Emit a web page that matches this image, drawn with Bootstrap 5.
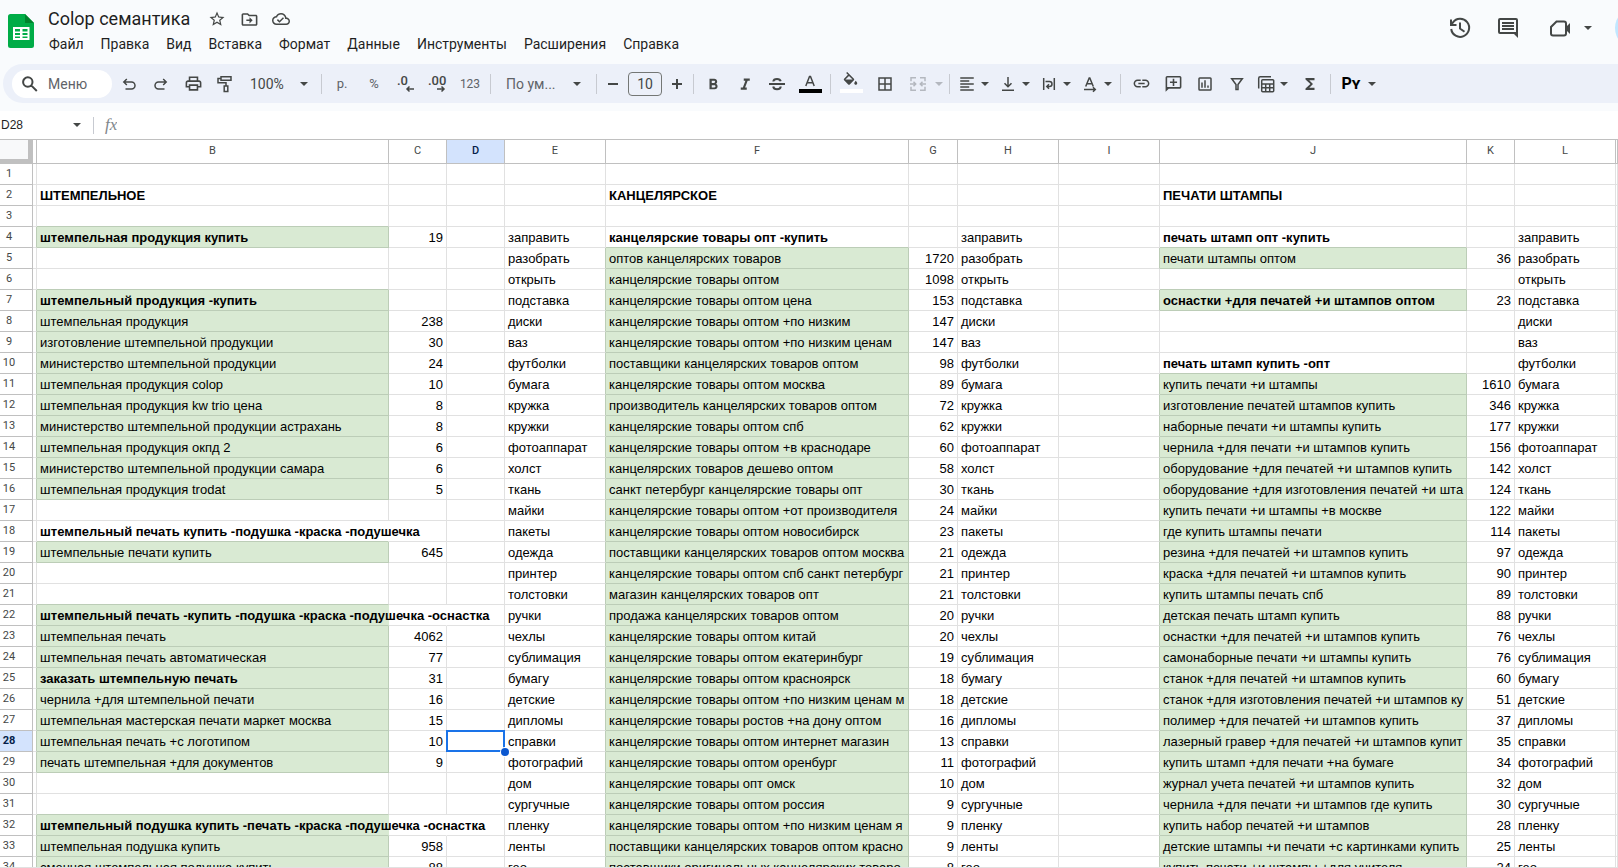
<!DOCTYPE html>
<html lang="ru">
<head>
<meta charset="utf-8">
<meta name="viewport" content="width=device-width, initial-scale=1">
<title>Colop семантика</title>
<link href="https://cdn.jsdelivr.net/npm/bootstrap@5.3.0/dist/css/bootstrap.min.css" rel="stylesheet">
<style>
  body { background: #f9fbfd; color: #1f1f1f; font-family: Roboto, sans-serif; font-size: 14px; line-height: 20px; }
  button { background: none; border: 0; padding: 0; color: #444746; }
  svg { display: block; fill: currentColor; flex: none; }
  .ln { fill: none; stroke: currentColor; stroke-width: 2; }
  .thin { stroke-width: 1.5; }

  .app-head { padding: 7px 0 10px 8px; }
  .logo { margin: 7px 14px 0 0; }
  .doc-title { font-size: 18px; line-height: 24px; font-weight: 400; margin: 0 11px 0 0; }
  .doc-menu { gap: 17px; margin: 3px 0 0 1px; }
  .doc-menu a { color: #1f1f1f; text-decoration: none; }
  .head-btn { width: 48px; height: 42px; }
  .meet-btn { margin-right: 21px; }
  .share-peek { width: 3px; height: 40px; overflow: hidden; }
  .share-peek span { display: block; width: 120px; height: 40px; border-radius: 20px; background: #c2e7ff; }

  .toolbar { background: #ecf0f9; height: 40px; margin: 0 0 8px 3px; padding-left: 9px; border-radius: 20px 0 0 20px; overflow: hidden; }
  .search-pill { width: 100px; height: 28px; border-radius: 14px; background: #fff; padding-left: 9px; gap: 9px; margin-right: 1px; color: #444746; flex: none; }
  .search-pill input { border: 0; outline: 0; background: none; width: 60px; padding: 0; color: #444746; }
  .search-pill input::placeholder { color: #5f6368; opacity: 1; }
  .tool { width: 32px; height: 32px; flex: none; display: flex; align-items: center; justify-content: center; }
  .tool-low { height: 24px; }
  .tool-wide { width: 35px; }
  .tool-slim { width: 24px; }
  .tool-set { gap: 2px; }
  .tool-drop { height: 32px; flex: none; display: flex; align-items: center; padding: 0 2px 0 1px; }
  .tool-drop .pic { width: 24px; display: flex; justify-content: center; }
  .tool-drop.roomy { padding-right: 0; }
  .tool-drop.roomy .pic { width: 30px; }
  .caret { width: 12px; height: 12px; }
  .rule { width: 1px; height: 20px; background: #c7cad1; margin: 0 4px; flex: none; }
  .zoom-btn { width: 76px; padding: 0 7px 0 9px; }
  .font-btn { width: 97px; padding: 0 9px 0 11px; color: #5f6368; }
  .size-box { width: 34px; height: 24px; border: 1px solid #747775; border-radius: 4px; background: none; text-align: center; padding: 0; margin: 0 3px; color: #444746; }
  .fmt { color: #5f6368; font-size: 13px; }
  .fmt-low { font-size: 12px; }
  .pen { font: 500 13px Roboto, sans-serif; }
  .py { color: #000; font-size: 16px; font-weight: 700; font-variant: small-caps; }
  .off { color: #b4b8bf; }

  .formula { background: #fff; height: 29px; border-bottom: 1px solid #c0c0c0; font-family: "Liberation Sans", sans-serif; font-size: 12px; }
  .name-box { width: 71px; border: 0; padding: 0 0 0 1px; background: none; color: #1f1f1f; }
  .formula .rule { height: 17px; margin: 0 11px 0 10px; }
  .fx { font: italic 400 17px "Liberation Serif", serif; color: #80868b; }
  .fx-input { border: 0; outline: 0; }

  .sheet { background: #fff; overflow: auto; scrollbar-width: none; border-bottom: 1px solid #e1e1e1; min-height: 0; }
  .sheet::-webkit-scrollbar { display: none; }
  .cells { table-layout: fixed; width: 100%; border-collapse: separate; border-spacing: 0; font-family: "Liberation Sans", sans-serif; font-size: 13px; color: #000; }
  .cells td { height: 21px; line-height: 18px; padding: 2px 3px 0; border-right: 1px solid #e1e1e1; border-bottom: 1px solid #e1e1e1; white-space: nowrap; overflow: hidden; vertical-align: top; }
  .cells th { font: 400 11px/16px Roboto, sans-serif; color: #444746; text-align: center; border-right: 1px solid #c0c0c0; border-bottom: 1px solid #c0c0c0; padding: 0; }
  .cells thead th { height: 24px; }
  .cells tbody th { padding: 2px 14px 0 0; vertical-align: top; }
  .cells .corner { background: #f8f9fa; border-right: 5px solid #c0c0c0; border-bottom-width: 5px; }
  .cells .picked { background: #d3e3fd; color: #041e49; font-weight: 700; }
  .cells thead .picked { font-weight: 500; }
  .cells .num { text-align: right; }
  .cells .strong { font-weight: 700; }
  .cells .green { background: #d9ead3; border-color: #bccdb7; }
  .cells .green-right { border-right-color: #bccdb7; }
  .cells .green-below { border-bottom-color: #bccdb7; }
  .cells .spill { overflow: visible; position: relative; z-index: 1; }
  .cells .spill, .cells .spilled { border-right-color: transparent; }
  .cells .active { position: relative; overflow: visible; }
  .active::before { content: ""; position: absolute; inset: -1px; border: 2px solid #1a73e8; z-index: 2; }
  .active::after { content: ""; position: absolute; right: -5px; bottom: -5px; width: 8px; height: 8px; border-radius: 50%; background: #0b57d0; box-shadow: 0 0 0 1px #fff; z-index: 3; }
</style>
</head>
<body class="vh-100 d-flex flex-column overflow-hidden">

<header class="app-head d-flex align-items-start">
  <svg class="logo" width="26" height="34" viewBox="0 0 26 34" aria-hidden="true">
    <path fill="#00ac47" d="M2.500 0H17l9 9v22.500a2.500 2.500 0 0 1-2.500 2.500h-21A2.500 2.500 0 0 1 0 31.500v-29A2.500 2.500 0 0 1 2.500 0z"/>
    <path fill="#00832d" d="M17 0l9 9h-9z"/>
    <path fill="#fff" fill-rule="evenodd" d="M5 13h16.500v13H5zM7 15v2.500h5V15zm7.500 0v2.500h5V15zM7 19v2h5v-2zm7.500 0v2h5v-2zM7 22.500V24h5v-1.500zm7.500 0V24h5v-1.500z"/>
  </svg>
  <div>
    <div class="d-flex align-items-center">
      <h1 class="doc-title">Colop семантика</h1>
      <button class="tool tool-low" aria-label="Добавить в помеченные"><svg width="18" height="18" viewBox="0 0 24 24"><path d="M22 9.240l-7.190-.620L12 2 9.190 8.630 2 9.240l5.460 4.730L5.820 21 12 17.270 18.180 21l-1.630-7.030L22 9.240zM12 15.400l-3.760 2.270 1-4.280-3.320-2.880 4.380-.380L12 6.100l1.710 4.040 4.380.380-3.320 2.880 1 4.280L12 15.400z"/></svg></button>
      <button class="tool tool-low" aria-label="Переместить"><svg width="19" height="19" viewBox="0 0 24 24"><path d="M20 6h-8l-2-2H4c-1.100 0-2 .9-2 2v12c0 1.100.9 2 2 2h16c1.100 0 2-.9 2-2V8c0-1.100-.9-2-2-2zm0 12H4V6h5.170l2 2H20v10zm-8-1 4-4-4-4v3H8v2h4z"/></svg></button>
      <button class="tool tool-low" aria-label="Сохранено на Диске"><svg width="18" height="18" viewBox="0 0 24 24"><path d="M19.350 10.040C18.670 6.590 15.640 4 12 4 9.110 4 6.600 5.640 5.350 8.040 2.340 8.360 0 10.910 0 14c0 3.310 2.690 6 6 6h13c2.760 0 5-2.240 5-5 0-2.640-2.050-4.780-4.650-4.960zM19 18H6c-2.210 0-4-1.790-4-4s1.790-4 4-4h.71C7.370 7.690 9.480 6 12 6c3.040 0 5.500 2.460 5.500 5.500v.5H19c1.660 0 3 1.340 3 3s-1.340 3-3 3zm-9-3.820-2.090-2.090L6.500 13.500 10 17l6.010-6.010-1.410-1.410z"/></svg></button>
    </div>
    <nav class="doc-menu d-flex" aria-label="Меню документа">
      <a href="#">Файл</a><a href="#">Правка</a><a href="#">Вид</a><a href="#">Вставка</a><a href="#">Формат</a><a href="#">Данные</a><a href="#">Инструменты</a><a href="#">Расширения</a><a href="#">Справка</a>
    </nav>
  </div>
  <div class="d-flex align-items-center ms-auto">
    <button class="head-btn d-flex align-items-center justify-content-center" aria-label="История версий"><svg width="24" height="24" viewBox="0 0 24 24"><path class="ln" d="M3.200 13a9 9 0 1 0 1.600-6.400L3 9M3 3.500V9h5.500M12 6.500v6l4.500 3.200"/></svg></button>
    <button class="head-btn d-flex align-items-center justify-content-center" aria-label="Комментарии"><svg width="24" height="24" viewBox="0 0 24 24"><path fill-rule="evenodd" d="M4 2h16a2 2 0 0 1 2 2v18l-4-4H4a2 2 0 0 1-2-2V4a2 2 0 0 1 2-2zM4 4v12h16V4zM6 6h12v2H6zm0 3h12v2H6zm0 3h12v2H6z"/></svg></button>
    <button class="meet-btn d-flex align-items-center ps-3" aria-label="Видеовстреча"><svg width="26" height="24" viewBox="0 0 26 24"><path class="ln" d="M8.500 5.500H16a2 2 0 0 1 2 2v10a2 2 0 0 1-2 2H5a2 2 0 0 1-2-2V11z"/><path d="M18 11l4-4v11l-4-4z"/></svg><svg class="caret ms-2" viewBox="0 0 12 12"><path d="M2 4h8L6 8z"/></svg></button>
    <div class="share-peek"><span></span></div>
  </div>
</header>

<div class="toolbar d-flex align-items-center" role="toolbar">
  <label class="search-pill d-flex align-items-center"><svg width="18" height="18" viewBox="0 0 18 18"><path class="ln" d="M11.500 7a4.700 4.700 0 1 1-9.400 0 4.700 4.700 0 0 1 9.400 0zM10.200 10.400l5.600 5.600"/></svg><input type="text" placeholder="Меню" aria-label="Меню"></label>
  <button class="tool" aria-label="Отменить"><svg width="18" height="18" viewBox="0 0 18 18"><path class="ln thin" d="M6.800 4 3.800 7l3 3M4 7h7.500a3.500 3.500 0 0 1 0 7H5.500"/></svg></button>
  <button class="tool" aria-label="Повторить"><svg width="18" height="18" viewBox="0 0 18 18"><path class="ln thin" d="M11.200 4l3 3-3 3M14 7H6.500a3.500 3.500 0 0 0 0 7h6"/></svg></button>
  <button class="tool" aria-label="Печать"><svg width="19" height="19" viewBox="0 0 24 24"><path d="M19 8h-1V3H6v5H5c-1.660 0-3 1.340-3 3v6h4v4h12v-4h4v-6c0-1.660-1.340-3-3-3zM8 5h8v3H8V5zm8 14H8v-4h8v4zm4-4h-2v-2H6v2H4v-4c0-.55.45-1 1-1h14c.55 0 1 .45 1 1v4z"/></svg></button>
  <button class="tool" aria-label="Копировать форматирование"><svg width="18" height="18" viewBox="0 0 18 18"><path class="ln thin" d="M5 1.700h10v3.600H5zM5 3.500H2v4.300h8v3M8.200 11h3.600v5.500H8.200z"/></svg></button>
  <button class="zoom-btn tool justify-content-between">100%<svg class="caret" viewBox="0 0 12 12"><path d="M2 4h8L6 8z"/></svg></button>
  <span class="rule"></span>
  <button class="tool fmt">р.</button>
  <button class="tool fmt">%</button>
  <button class="tool" aria-label="Меньше знаков"><svg width="20" height="20" viewBox="0 0 20 20"><text class="pen" x="1" y="11">.0</text><path class="ln thin" d="M18 15h-7M13.500 12.500 11 15l2.500 2.500"/></svg></button>
  <button class="tool" aria-label="Больше знаков"><svg width="20" height="20" viewBox="0 0 20 20"><text class="pen" x="0" y="11">.00</text><path class="ln thin" d="M9 15h7M13.500 12.500 16 15l-2.500 2.500"/></svg></button>
  <button class="tool fmt fmt-low">123</button>
  <span class="rule"></span>
  <button class="font-btn tool justify-content-between">По ум...<svg class="caret" viewBox="0 0 12 12" color="#444746"><path d="M2 4h8L6 8z"/></svg></button>
  <span class="rule"></span>
  <button class="tool tool-slim" aria-label="Уменьшить шрифт"><svg width="12" height="12" viewBox="0 0 12 12"><path d="M1 5h10v2H1z"/></svg></button>
  <input class="size-box" type="text" value="10" aria-label="Размер шрифта">
  <button class="tool tool-slim" aria-label="Увеличить шрифт"><svg width="12" height="12" viewBox="0 0 12 12"><path d="M1 5h4V1h2v4h4v2H7v4H5V7H1z"/></svg></button>
  <span class="rule"></span>
  <button class="tool" aria-label="Полужирный"><svg width="18" height="18" viewBox="0 0 24 24"><path d="M14.600 11.790c.97-.67 1.650-1.770 1.650-2.790 0-2.260-1.750-4-4-4H6v14h7.040c2.090 0 3.710-1.700 3.710-3.790 0-1.520-.86-2.820-2.150-3.420zM9 7.500h3c.83 0 1.500.67 1.500 1.500s-.67 1.500-1.500 1.500H9v-3zm3.500 9H9v-3h3.500c.83 0 1.500.67 1.500 1.500s-.67 1.500-1.500 1.500z"/></svg></button>
  <button class="tool" aria-label="Курсив"><svg width="18" height="18" viewBox="0 0 24 24"><path d="M9 4.500v3h2.210l-3.420 9H5v3h8v-3h-2.210l3.420-9H17v-3z"/></svg></button>
  <button class="tool" aria-label="Зачеркнутый"><svg width="18" height="18" viewBox="0 0 18 18"><path class="ln" d="M0 9h16M11.700 6.300C11.300 4.700 10 4 8 4 6 4 4.500 4.800 4.300 6.500M4.200 11.500C4.500 13.300 6 14.200 8 14.200s3.700-.8 3.700-2.700"/></svg></button>
  <button class="tool" aria-label="Цвет текста"><svg width="24" height="24" viewBox="0 0 24 24"><path class="ln thin" d="M7.800 14 11.500 4.500h1L16.200 14M9.300 10.800h5.400"/><path fill="#000" d="M1 17h23v4H1z"/></svg></button>
  <span class="rule"></span>
  <button class="tool" aria-label="Цвет заливки"><svg width="24" height="24" viewBox="0 0 24 24"><path transform="translate(2.500 0) scale(.75)" d="M16.560 8.940L7.620 0 6.210 1.410l2.380 2.380-5.150 5.150c-.59.59-.59 1.540 0 2.120l5.500 5.500c.29.29.68.44 1.060.44s.77-.15 1.060-.44l5.500-5.500c.59-.58.59-1.530 0-2.120zM5.210 10L10 5.210 14.790 10H5.210zM19 11.500s-2 2.170-2 3.500c0 1.100.9 2 2 2s2-.9 2-2c0-1.330-2-3.500-2-3.500z"/><path fill="#fff" d="M1 17h23v4H1z"/></svg></button>
  <button class="tool tool-wide" aria-label="Границы"><svg width="18" height="18" viewBox="0 0 24 24"><path d="M3 3v18h18V3H3zm8 16H5v-6h6v6zm0-8H5V5h6v6zm8 8h-6v-6h6v6zm0-8h-6V5h6v6z"/></svg></button>
  <button class="tool-drop roomy off" aria-label="Объединить ячейки"><span class="pic"><svg width="18" height="18" viewBox="0 0 18 18"><path class="ln thin" d="M7 2.800H2v3.500M11 2.800h5v3.500M7 15.200H2v-3.500M11 15.200h5v-3.500M1 9h5.500M4.500 6.800 6.700 9l-2.200 2.200M17 9h-5.500M13.500 6.800 11.300 9l2.200 2.200"/></svg></span><svg class="caret" viewBox="0 0 12 12"><path d="M2 4h8L6 8z"/></svg></button>
  <span class="rule"></span>
  <div class="tool-set d-flex">
    <button class="tool-drop" aria-label="Выравнивание"><span class="pic"><svg width="18" height="18" viewBox="0 0 24 24"><path d="M15 15H3v2h12v-2zm0-8H3v2h12V7zM3 13h18v-2H3v2zm0 8h18v-2H3v2zM3 3v2h18V3H3z"/></svg></span><svg class="caret" viewBox="0 0 12 12"><path d="M2 4h8L6 8z"/></svg></button>
    <button class="tool-drop" aria-label="Вертикальное выравнивание"><span class="pic"><svg width="18" height="18" viewBox="0 0 18 18"><path class="ln thin" d="M9 2v9.500M5.500 8.300 9 11.800l3.500-3.500M3 15.200h12"/></svg></span><svg class="caret" viewBox="0 0 12 12"><path d="M2 4h8L6 8z"/></svg></button>
    <button class="tool-drop" aria-label="Перенос текста"><span class="pic"><svg width="18" height="18" viewBox="0 0 18 18"><path class="ln thin" d="M3.700 3v12M14.300 3v12M5.500 6.500h4a2.500 2.500 0 0 1 0 5H7M9 9.300l-2.200 2.200L9 13.700"/></svg></span><svg class="caret" viewBox="0 0 12 12"><path d="M2 4h8L6 8z"/></svg></button>
    <button class="tool-drop" aria-label="Поворот текста"><span class="pic"><svg width="18" height="18" viewBox="0 0 18 18"><path class="ln thin" d="M4.700 11.500 8.200 3h.6l3.500 8.500M6 8.800h5M3 14.500h11M12 12.300l2.300 2.200L12 16.700"/></svg></span><svg class="caret" viewBox="0 0 12 12"><path d="M2 4h8L6 8z"/></svg></button>
  </div>
  <span class="rule"></span>
  <button class="tool" aria-label="Вставить ссылку"><svg width="19" height="19" viewBox="0 0 24 24"><path d="M3.900 12c0-1.710 1.390-3.100 3.100-3.100h4V7H7c-2.760 0-5 2.240-5 5s2.240 5 5 5h4v-1.900H7c-1.710 0-3.100-1.390-3.100-3.100zM8 13h8v-2H8v2zm9-6h-4v1.900h4c1.710 0 3.100 1.390 3.100 3.100s-1.390 3.100-3.100 3.100h-4V17h4c2.760 0 5-2.240 5-5s-2.240-5-5-5z"/></svg></button>
  <button class="tool" aria-label="Вставить комментарий"><svg width="19" height="19" viewBox="0 0 24 24"><path fill-rule="evenodd" d="M4 2.500h16a2 2 0 0 1 2 2v12a2 2 0 0 1-2 2H6l-4 4v-18a2 2 0 0 1 2-2zm0 2v12h16v-12zM11 6h2v3.500h3.500v2H13V15h-2v-3.500H7.500v-2H11z"/></svg></button>
  <button class="tool" aria-label="Вставить диаграмму"><svg width="18" height="18" viewBox="0 0 24 24"><path fill-rule="evenodd" d="M5 3h14a2 2 0 0 1 2 2v14a2 2 0 0 1-2 2H5a2 2 0 0 1-2-2V5a2 2 0 0 1 2-2zm0 2v14h14V5zM7 10h2v7H7zm4-3h2v10h-2zm4 7h2v3h-2z"/></svg></button>
  <button class="tool" aria-label="Создать фильтр"><svg width="18" height="18" viewBox="0 0 18 18"><path class="ln thin" d="M3.700 3.700h10.600L10 9.500v5H8v-5z"/></svg></button>
  <div class="tool-set d-flex">
    <button class="tool-drop" aria-label="Режимы таблицы"><span class="pic"><svg width="18" height="18" viewBox="0 0 18 18"><path class="ln thin" d="M1.700 13.500V3.200a1.500 1.500 0 0 1 1.500-1.500H14M5.700 4.700h10a1 1 0 0 1 1 1v10a1 1 0 0 1-1 1h-10a1 1 0 0 1-1-1v-10a1 1 0 0 1 1-1zM4.700 9h12M4.700 12.700h12M8.700 9v7.500M12.700 9v7.500"/></svg></span><svg class="caret" viewBox="0 0 12 12"><path d="M2 4h8L6 8z"/></svg></button>
    <button class="tool" aria-label="Функции"><svg width="18" height="18" viewBox="0 0 24 24"><path d="M18 4H6v2l6.500 6L6 18v2h12v-3h-7l5-5-5-5h7z"/></svg></button>
  </div>
  <span class="rule"></span>
  <button class="tool-drop roomy"><span class="pic py">Py</span><svg class="caret" viewBox="0 0 12 12"><path d="M2 4h8L6 8z"/></svg></button>
</div>

<div class="formula d-flex align-items-center">
  <input class="name-box" type="text" value="D28" aria-label="Поле имени">
  <svg class="caret" viewBox="0 0 12 12" color="#444746"><path d="M2 4h8L6 8z"/></svg>
  <span class="rule"></span>
  <span class="fx">fx</span>
  <input class="fx-input flex-grow-1" type="text" aria-label="Формула">
</div>

<main class="sheet flex-grow-1">
  <table class="cells">
    <colgroup id="cols"></colgroup>
    <thead><tr id="head"></tr></thead>
    <tbody id="rows"></tbody>
  </table>
</main>

<script src="https://cdn.jsdelivr.net/npm/bootstrap@5.3.0/dist/js/bootstrap.bundle.min.js"></script>
<script>
  // Column letters and widths; the last column takes the remaining space.
  const columns = [['', 33], ['', 4], ['B', 352], ['C', 58], ['D', 58], ['E', 101], ['F', 303], ['G', 49],
                   ['H', 101], ['I', 101], ['J', 307], ['K', 48], ['L', 101], ['', 0]];
  const words = 'заправить,разобрать,открыть,подставка,диски,ваз,футболки,бумага,кружка,кружки,фотоаппарат,холст,ткань,майки,пакеты,одежда,принтер,толстовки,ручки,чехлы,сублимация,бумагу,детские,дипломы,справки,фотографий,дом,сургучные,пленку,ленты,гео'.split(',');

  // Leading marks: * bold, # green fill, > text runs over the next cells.
  const stamps = {
    2: ['*ШТЕМПЕЛЬНОЕ'], 4: ['#*штемпельная продукция купить', 19], 7: ['#*штемпельный продукция -купить'],
    8: ['#штемпельная продукция', 238], 9: ['#изготовление штемпельной продукции', 30],
    10: ['#министерство штемпельной продукции', 24], 11: ['#штемпельная продукция colop', 10],
    12: ['#штемпельная продукция kw trio цена', 8], 13: ['#министерство штемпельной продукции астрахань', 8],
    14: ['#штемпельная продукция окпд 2', 6], 15: ['#министерство штемпельной продукции самара', 6],
    16: ['#штемпельная продукция trodat', 5], 18: ['>*штемпельный печать купить -подушка -краска -подушечка'],
    19: ['#штемпельные печати купить', 645], 22: ['#>>*штемпельный печать -купить -подушка -краска -подушечка -оснастка'],
    23: ['#штемпельная печать', 4062], 24: ['#штемпельная печать автоматическая', 77],
    25: ['#*заказать штемпельную печать', 31], 26: ['#чернила +для штемпельной печати', 16],
    27: ['#штемпельная мастерская печати маркет москва', 15], 28: ['#штемпельная печать +с логотипом', 10],
    29: ['#печать штемпельная +для документов', 9], 32: ['#>>*штемпельный подушка купить -печать -краска -подушечка -оснастка'],
    33: ['#штемпельная подушка купить', 958], 34: ['#сменная штемпельная подушка купить', 88]
  };
  const office = [
    ['оптов канцелярских товаров', 1720], ['канцелярские товары оптом', 1098], ['канцелярские товары оптом цена', 153],
    ['канцелярские товары оптом +по низким', 147], ['канцелярские товары оптом +по низким ценам', 147],
    ['поставщики канцелярских товаров оптом', 98], ['канцелярские товары оптом москва', 89],
    ['производитель канцелярских товаров оптом', 72], ['канцелярские товары оптом спб', 62],
    ['канцелярские товары оптом +в краснодаре', 60], ['канцелярских товаров дешево оптом', 58],
    ['санкт петербург канцелярские товары опт', 30], ['канцелярские товары оптом +от производителя', 24],
    ['канцелярские товары оптом новосибирск', 23], ['поставщики канцелярских товаров оптом москва', 21],
    ['канцелярские товары оптом спб санкт петербург', 21], ['магазин канцелярских товаров опт', 21],
    ['продажа канцелярских товаров оптом', 20], ['канцелярские товары оптом китай', 20],
    ['канцелярские товары оптом екатеринбург', 19], ['канцелярские товары оптом красноярск', 18],
    ['канцелярские товары оптом +по низким ценам м', 18], ['канцелярские товары ростов +на дону оптом', 16],
    ['канцелярские товары оптом интернет магазин', 13], ['канцелярские товары оптом оренбург', 11],
    ['канцелярские товары опт омск', 10], ['канцелярские товары оптом россия', 9],
    ['канцелярские товары оптом +по низким ценам я', 9], ['поставщики канцелярских товаров оптом красно', 9],
    ['поставщики оригинальных канцелярских товаро', 8]
  ];
  const seals = [
    ['купить печати +и штампы', 1610], ['изготовление печатей штампов купить', 346], ['наборные печати +и штампы купить', 177],
    ['чернила +для печати +и штампов купить', 156], ['оборудование +для печатей +и штампов купить', 142],
    ['оборудование +для изготовления печатей +и шта', 124], ['купить печати +и штампы +в москве', 122],
    ['где купить штампы печати', 114], ['резина +для печатей +и штампов купить', 97],
    ['краска +для печатей +и штампов купить', 90], ['купить штампы печать спб', 89], ['детская печать штамп купить', 88],
    ['оснастки +для печатей +и штампов купить', 76], ['самонаборные печати +и штампы купить', 76],
    ['станок +для печатей +и штампов купить', 60], ['станок +для изготовления печатей +и штампов ку', 51],
    ['полимер +для печатей +и штампов купить', 37], ['лазерный гравер +для печатей +и штампов купит', 35],
    ['купить штамп +для печати +на бумаге', 34], ['журнал учета печатей +и штампов купить', 32],
    ['чернила +для печати +и штампов где купить', 30], ['купить набор печатей +и штампов', 28],
    ['детские штампы +и печати +с картинками купить', 25], ['купить печати +и штампы +для учителя', 24]
  ];

  const grid = [];
  for (let r = 1; r <= 34; r++) {
    const row = Array(13).fill('');
    if (stamps[r]) { row[1] = stamps[r][0]; row[2] = stamps[r][1] ?? ''; }
    if (r >= 4) row[4] = row[7] = row[11] = words[r - 4];
    if (r >= 5) { row[5] = '#' + office[r - 5][0]; row[6] = office[r - 5][1]; }
    if (r >= 11) { row[9] = '#' + seals[r - 11][0]; row[10] = seals[r - 11][1]; }
    grid.push(row);
  }
  grid[1][5] = '*КАНЦЕЛЯРСКОЕ'; grid[1][9] = '*ПЕЧАТИ ШТАМПЫ';
  grid[3][5] = '*канцелярские товары опт -купить'; grid[3][9] = '*печать штамп опт -купить';
  grid[4][9] = '#печати штампы оптом'; grid[4][10] = 36;
  grid[6][9] = '#*оснастки +для печатей +и штампов оптом'; grid[6][10] = 23;
  grid[9][9] = '*печать штамп купить -опт';

  const marks = v => /^[#>*]*/.exec(String(v ?? ''))[0];
  const isGreen = v => marks(v).includes('#');
  document.getElementById('cols').innerHTML = columns.map(c => c[1] ? `<col style="width:${c[1]}px">` : '<col>').join('');
  document.getElementById('head').innerHTML = columns.map((c, i) =>
    `<th scope="col" class="${i === 0 ? 'corner' : c[0] === 'D' ? 'picked' : ''}">${c[0]}</th>`).join('');
  document.getElementById('rows').innerHTML = grid.map((row, r) => {
    let left = 0;
    const tds = row.map((v, c) => {
      const m = marks(v), cls = [];
      const run = m.split('>').length - 1;
      if (left > 0) { left--; if (left > 0) cls.push('spilled'); }
      if (run) { left = run; cls.push('spill'); }
      if (m.includes('#')) cls.push('green');
      if (m.includes('*')) cls.push('strong');
      if (isGreen(row[c + 1])) cls.push('green-right');
      if (grid[r + 1] && isGreen(grid[r + 1][c])) cls.push('green-below');
      if (typeof v === 'number') cls.push('num');
      if (r === 27 && c === 3) cls.push('active');
      return `<td${cls.length ? ` class="${cls.join(' ')}"` : ''}>${String(v).slice(m.length)}</td>`;
    }).join('');
    return `<tr><th scope="row"${r === 27 ? ' class="picked"' : ''}>${r + 1}</th>${tds}</tr>`;
  }).join('');
</script>
</body>
</html>
